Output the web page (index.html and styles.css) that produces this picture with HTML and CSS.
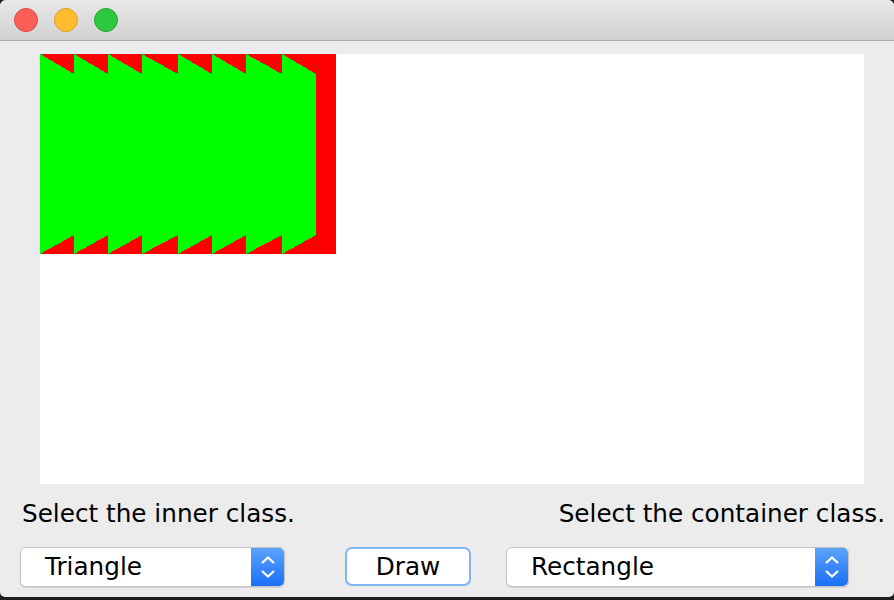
FILE: index.html
```html
<!DOCTYPE html>
<html>
<head>
<meta charset="utf-8">
<link rel="stylesheet" href="styles.css">
</head>
<body>
<div class="window">
  <div class="titlebar">
    <span class="light red"></span>
    <span class="light yellow"></span>
    <span class="light green"></span>
  </div>
  <div class="content">
    <div class="canvas">
      <svg class="drawing" width="296" height="200" viewBox="0 0 296 200" shape-rendering="crispEdges">
        <rect x="0" y="0" width="296" height="200" fill="#ff0000"/>
        <polygon points="242,0 276,20 276,181 242,200" fill="#00ff00"/>
        <polygon points="206,0 242,20 242,181 206,200" fill="#00ff00"/>
        <polygon points="172,0 206,20 206,181 172,200" fill="#00ff00"/>
        <polygon points="138,0 172,20 172,181 138,200" fill="#00ff00"/>
        <polygon points="102,0 138,20 138,181 102,200" fill="#00ff00"/>
        <polygon points="68,0 102,20 102,181 68,200" fill="#00ff00"/>
        <polygon points="34,0 68,20 68,181 34,200" fill="#00ff00"/>
        <polygon points="0,0 34,20 34,181 0,200" fill="#00ff00"/>
      </svg>
    </div>
    <div class="labels">
      <span class="label">Select the inner class.</span>
      <span class="label">Select the container class.</span>
    </div>
    <div class="controls">
      <div class="combo combo-inner">
        <span class="combo-text">Triangle</span>
        <span class="combo-arrows">
          <svg width="16" height="22" viewBox="0 0 16 22"><path d="M2 7 L8 1.5 L14 7 M2 15 L8 20.5 L14 15" fill="none" stroke="#fff" stroke-width="2.2"/></svg>
        </span>
      </div>
      <button class="button">Draw</button>
      <div class="combo combo-container">
        <span class="combo-text">Rectangle</span>
        <span class="combo-arrows">
          <svg width="16" height="22" viewBox="0 0 16 22"><path d="M2 7 L8 1.5 L14 7 M2 15 L8 20.5 L14 15" fill="none" stroke="#fff" stroke-width="2.2"/></svg>
        </span>
      </div>
    </div>
  </div>
</div>
</body>
</html>
```
FILE: styles.css
```css
html, body {
  margin: 0;
  padding: 0;
  background: #1e1e1e;
}
body {
  width: 894px;
  height: 600px;
  overflow: hidden;
  font-family: "DejaVu Sans", sans-serif;
}
.window {
  width: 894px;
  height: 597px;
  background: #ececec;
  border-radius: 6px 6px 5px 5px;
  overflow: hidden;
}
.titlebar {
  height: 40px;
  border-bottom: 1px solid #ababab;
  background: linear-gradient(#e9e7e9, #d2d2d2);
  display: flex;
  align-items: center;
  padding-left: 14px;
  gap: 16px;
  box-sizing: content-box;
}
.light {
  width: 22px;
  height: 22px;
  border-radius: 50%;
  display: block;
}
.red { background: #fd5f57; border: 1px solid #e1463f; }
.yellow { background: #febc2e; border: 1px solid #de9f22; }
.green { background: #2ec840; border: 1px solid #23a62f; }
.content {
  display: flex;
  flex-direction: column;
}
.canvas {
  margin: 13px 0 0 40px;
  width: 824px;
  height: 430px;
  background: #ffffff;
}
.drawing {
  display: block;
}
.labels {
  display: flex;
  justify-content: space-between;
  margin-top: 15px;
  padding: 0 9px 0 22px;
  height: 30px;
}
.label {
  font-size: 24.7px;
  line-height: 30px;
  color: #000;
}
.controls {
  display: flex;
  margin-top: 18px;
  height: 40px;
}
.combo {
  height: 40px;
  box-sizing: border-box;
  display: flex;
  background: #fff;
  border: 1px solid #c4c4c4;
  border-radius: 6px;
  box-shadow: 0 1px 1px rgba(0,0,0,0.12);
  overflow: hidden;
}
.combo-inner {
  margin-left: 20px;
  width: 265px;
}
.combo-container {
  margin-left: 35px;
  width: 343px;
}
.combo-text {
  flex: 1;
  font-size: 24.7px;
  line-height: 38px;
  padding-left: 24px;
  color: #000;
}
.combo-arrows {
  width: 33px;
  display: flex;
  align-items: center;
  justify-content: center;
  background: linear-gradient(#5ba3fb, #1a70f7);
}
.combo-arrows svg {
  display: block;
}
.button {
  margin-left: 60px;
  width: 126px;
  height: 39px;
  box-sizing: border-box;
  background: #fff;
  border: 2px solid #80b5f0;
  border-radius: 7px;
  font-family: "DejaVu Sans", sans-serif;
  font-size: 24.7px;
  line-height: 33px;
  color: #000;
  padding: 0;
}
```
